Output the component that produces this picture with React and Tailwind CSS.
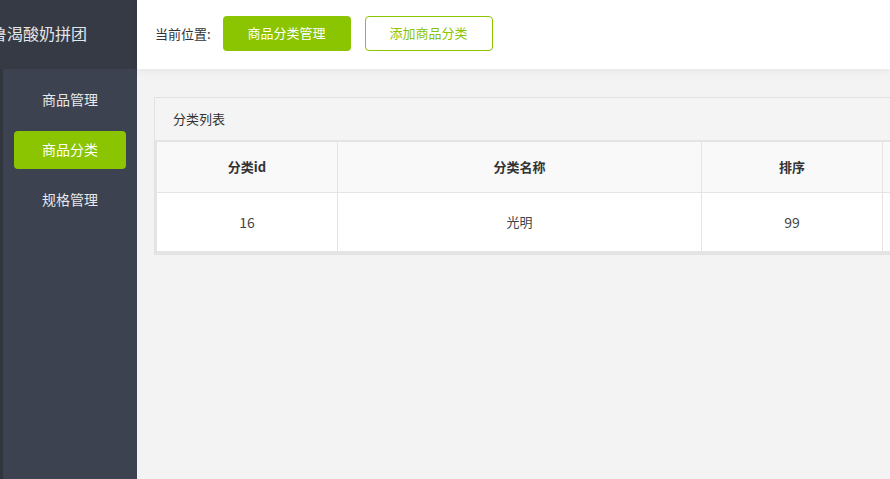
import React from "react";

const font = { fontFamily: '"Microsoft YaHei", "Noto Sans CJK SC", "Noto Sans", sans-serif' };

export default function App() {
  return (
    <div className="flex h-[479px] w-[890px] overflow-hidden bg-[#f3f3f3]" style={font}>
      <aside className="flex w-[137px] shrink-0 flex-col">
        <div className="flex h-[69px] items-center overflow-hidden whitespace-nowrap bg-[#353a44] pb-[4px] text-[16px] text-[#e4e6ea]">
          <span className="-ml-[9px]">鲁渴酸奶拼团</span>
        </div>
        <div className="flex flex-1">
          <div className="w-[3px] bg-[#30353e]" />
          <nav className="flex flex-1 flex-col gap-[12px] bg-[#3c4250] px-[11px] pt-[12px]">
            <div className="flex h-[38px] items-center justify-center pb-[2px] text-[14px] text-[#e6e8ec]">商品管理</div>
            <div className="flex h-[38px] items-center justify-center rounded-[4px] bg-[#8bc400] pb-[2px] text-[14px] text-white">商品分类</div>
            <div className="flex h-[38px] items-center justify-center pb-[2px] text-[14px] text-[#e6e8ec]">规格管理</div>
          </nav>
        </div>
      </aside>
      <main className="flex min-w-0 flex-1 flex-col">
        <header className="relative z-10 flex h-[69px] shrink-0 items-center bg-white pb-[2px] pl-[18px] shadow-[0_2px_8px_rgba(0,0,0,0.06)]">
          <span className="text-[13px] text-[#333]">当前位置:</span>
          <button className="ml-[12px] flex h-[35px] w-[128px] items-center justify-center rounded-[4px] bg-[#8bc400] pb-[2px] text-[13px] text-white">商品分类管理</button>
          <button className="ml-[14px] flex h-[35px] w-[128px] items-center justify-center rounded-[4px] border border-[#8bc400] bg-white pb-[2px] text-[13px] text-[#8bc400]">添加商品分类</button>
        </header>
        <div className="pl-[17px] pt-[28px]">
          <div className="w-[960px] border border-[#e2e2e2] bg-[#f4f4f4]">
            <div className="flex h-[42px] items-center pl-[18px] text-[13px] text-[#333]">分类列表</div>
            <div className="border-t-2 border-l-2 border-b-[3px] border-[#e4e4e4]">
              <div className="flex h-[51px] border-b border-[#e4e4e4] bg-[#f9f9f9] text-[13px] font-bold text-[#333]">
                <div className="flex w-[181px] items-center justify-center border-r border-[#e4e4e4]">分类id</div>
                <div className="flex w-[364px] items-center justify-center border-r border-[#e4e4e4]">分类名称</div>
                <div className="flex w-[181px] items-center justify-center border-r border-[#e4e4e4]">排序</div>
                <div className="flex-1" />
              </div>
              <div className="flex h-[58px] bg-white text-[14px] text-[#444]">
                <div className="flex w-[181px] items-center justify-center border-r border-[#e4e4e4]">16</div>
                <div className="flex w-[364px] items-center justify-center border-r border-[#e4e4e4] text-[13px]">光明</div>
                <div className="flex w-[181px] items-center justify-center border-r border-[#e4e4e4]">99</div>
                <div className="flex-1" />
              </div>
            </div>
          </div>
        </div>
      </main>
    </div>
  );
}
